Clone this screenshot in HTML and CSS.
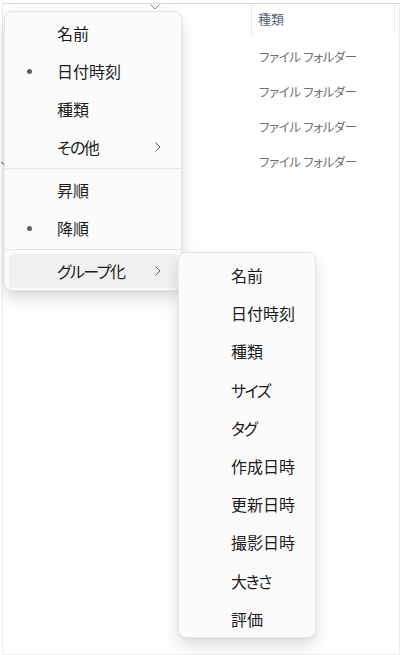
FILE: index.html
```html
<!DOCTYPE html>
<html lang="ja">
<head>
<meta charset="utf-8">
<link rel="stylesheet" href="styles.css">
</head>
<body>
<div class="frame">
  <div class="header">
    <div class="col col-name">
      <svg class="sort" width="10" height="6" viewBox="0 0 10 6"><polyline points="0.5,0.5 5,5 9.5,0.5" fill="none" stroke="#8a8a8a" stroke-width="1"/></svg>
    </div>
    <div class="col col-type">種類</div>
    <div class="col col-rest"></div>
  </div>
  <div class="rows">
    <div class="row"><span class="cell-name"></span><span class="cell-type">ファイル フォルダー</span></div>
    <div class="row"><span class="cell-name"></span><span class="cell-type">ファイル フォルダー</span></div>
    <div class="row"><span class="cell-name"></span><span class="cell-type">ファイル フォルダー</span></div>
    <div class="row"><span class="cell-name"></span><span class="cell-type">ファイル フォルダー</span></div>
  </div>
  <svg class="nav-chev" width="5" height="6" viewBox="0 0 5 6"><polyline points="0,1 3,3.5" fill="none" stroke="#5a4a40" stroke-width="1"/></svg>
</div>

<div class="menu menu-main">
  <div class="item"><span class="mark"></span><span class="label">名前</span></div>
  <div class="item"><span class="mark"><i class="dot"></i></span><span class="label">日付時刻</span></div>
  <div class="item"><span class="mark"></span><span class="label">種類</span></div>
  <div class="item"><span class="mark"></span><span class="label kana">その他</span><svg class="chev" width="6" height="10" viewBox="0 0 6 10"><polyline points="0.5,0.5 5,5 0.5,9.5" fill="none" stroke="#5c5c5c" stroke-width="1"/></svg></div>
  <div class="sep"></div>
  <div class="item"><span class="mark"></span><span class="label">昇順</span></div>
  <div class="item"><span class="mark"><i class="dot"></i></span><span class="label">降順</span></div>
  <div class="sep"></div>
  <div class="item active"><span class="mark"></span><span class="label kana">グループ化</span><svg class="chev" width="6" height="10" viewBox="0 0 6 10"><polyline points="0.5,0.5 5,5 0.5,9.5" fill="none" stroke="#5c5c5c" stroke-width="1"/></svg></div>
</div>

<div class="menu menu-sub">
  <div class="item"><span class="mark"></span><span class="label">名前</span></div>
  <div class="item"><span class="mark"></span><span class="label">日付時刻</span></div>
  <div class="item"><span class="mark"></span><span class="label">種類</span></div>
  <div class="item"><span class="mark"></span><span class="label kana">サイズ</span></div>
  <div class="item"><span class="mark"></span><span class="label kana">タグ</span></div>
  <div class="item"><span class="mark"></span><span class="label">作成日時</span></div>
  <div class="item"><span class="mark"></span><span class="label">更新日時</span></div>
  <div class="item"><span class="mark"></span><span class="label">撮影日時</span></div>
  <div class="item"><span class="mark"></span><span class="label kana">大きさ</span></div>
  <div class="item"><span class="mark"></span><span class="label">評価</span></div>
</div>
</body>
</html>
```

FILE: styles.css
```css
* { box-sizing: border-box; }
html, body {
  margin: 0;
  padding: 0;
  width: 400px;
  height: 655px;
  background: #ffffff;
  overflow: hidden;
  font-family: "Noto Sans CJK JP", "Noto Sans", sans-serif;
  font-feature-settings: "palt" 1;
}
.frame {
  position: relative;
  margin: 3px 0 0 2px;
  width: 398px;
  height: 652px;
  border: 1px solid #ececec;
  border-top-color: #d9dbe4;
}
.header {
  display: flex;
  height: 31px;
}
.col {
  height: 31px;
}
.col-name {
  position: relative;
  width: 249px;
  border-right: 1px solid #e8e8e8;
}
.sort {
  position: absolute;
  left: 147px;
  top: 0px;
}
.col-type {
  width: 143px;
  border-right: 1px solid #eeeeee;
  padding-left: 6px;
  font-size: 13px;
  line-height: 29px;
  color: #55627a;
}
.rows {
  padding-top: 4px;
}
.row {
  display: flex;
  height: 35px;
  align-items: center;
}
.cell-name {
  width: 249px;
}
.cell-type {
  padding-left: 7px;
  font-size: 12.5px;
  letter-spacing: -0.4px;
  color: #6f6f6f;
}
.nav-chev {
  position: absolute;
  left: -2px;
  top: 157px;
}

.menu {
  position: absolute;
  display: flex;
  flex-direction: column;
  gap: 4px;
  padding: 4px 4px 0;
  background: #fbfbfb;
  border: 1px solid #e6e6e6;
  border-radius: 8px;
  box-shadow: 0 8px 16px rgba(0, 0, 0, 0.13), 0 1px 3px rgba(0, 0, 0, 0.06);
}
.menu-main {
  left: 4px;
  top: 11px;
  width: 178px;
  height: 280px;
}
.menu-sub {
  left: 178px;
  top: 252px;
  width: 138px;
  height: 386px;
  padding-top: 5px;
  gap: 4.2px;
}
.item {
  display: flex;
  align-items: center;
  height: 34px;
  flex: none;
  border-radius: 4px;
  padding-right: 16px;
  font-size: 16px;
  color: #1b1b1b;
}
.item.active {
  background: #f0f0f0;
}
.mark {
  width: 48px;
  flex: none;
  display: flex;
  align-items: center;
}
.dot {
  display: block;
  width: 5px;
  height: 5px;
  margin-left: 18px;
  border-radius: 50%;
  background: #5e5e5e;
}
.label {
  flex: 1;
  line-height: 1;
}
.label.kana {
  letter-spacing: -1.5px;
}
.chev {
  flex: none;
}
.sep {
  flex: none;
  height: 1px;
  margin: 0 -4px;
  background: #e8e8e8;
}
```
